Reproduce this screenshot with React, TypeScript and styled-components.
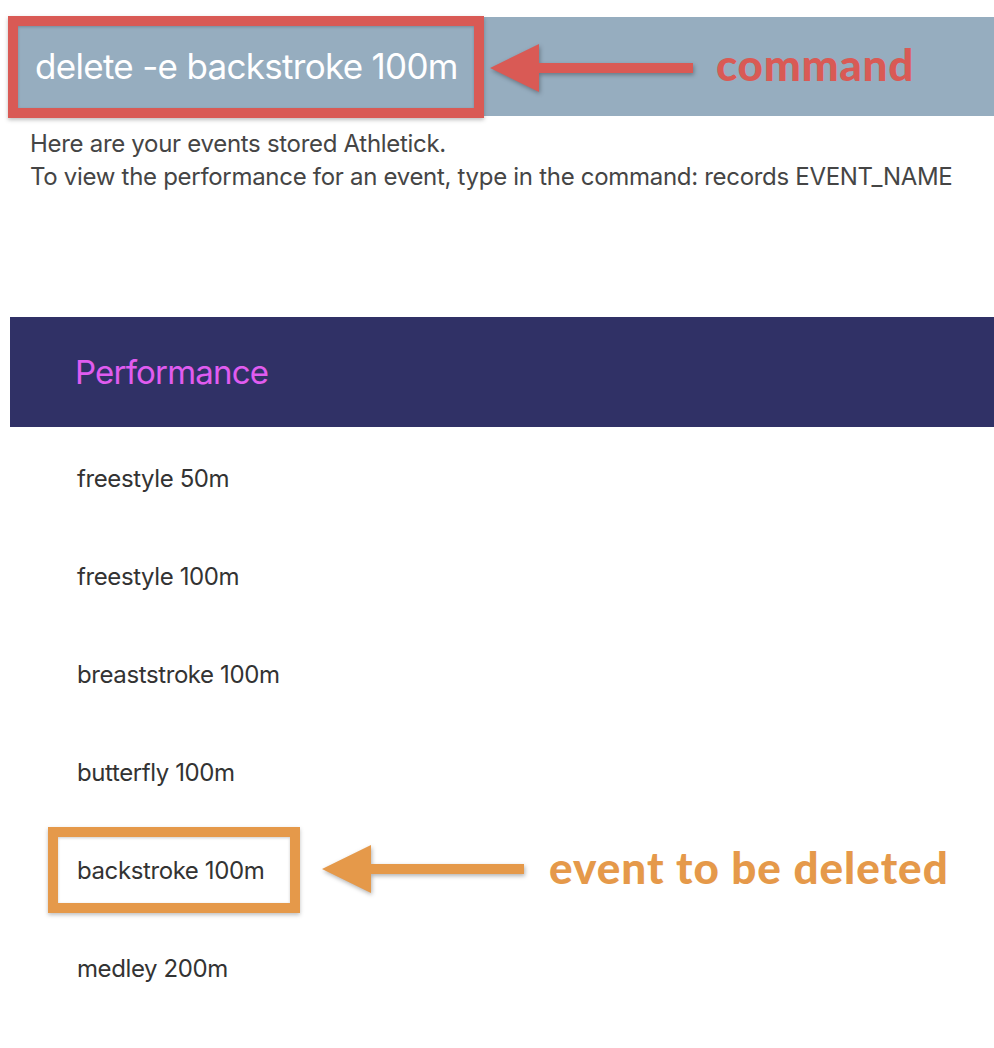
import React from "react";
import styled, { createGlobalStyle } from "styled-components";

const GlobalStyle = createGlobalStyle`
  html, body {
    margin: 0;
    padding: 0;
    background: #ffffff;
  }
  body {
    font-family: Inter, "Noto Sans", "Liberation Sans", sans-serif;
    -webkit-font-smoothing: antialiased;
  }
`;

const Page = styled.div`
  position: relative;
  width: 994px;
  height: 1048px;
  padding: 17px 0 0 10px;
  box-sizing: border-box;
  overflow: hidden;
`;

const CommandBar = styled.div`
  display: flex;
  align-items: center;
  height: 99px;
  padding-left: 25px;
  padding-bottom: 2px;
  box-sizing: border-box;
  background: #96adbf;
`;

const CommandText = styled.span`
  font-size: 35px;
  letter-spacing: -0.7px;
  color: #ffffff;
`;

const Message = styled.div`
  padding: 11px 0 0 20px;
  height: 190px;
  font-size: 24px;
  line-height: 33px;
  letter-spacing: -0.3px;
  color: #454545;
`;

const PanelHeader = styled.div`
  display: flex;
  align-items: center;
  height: 110px;
  padding-left: 65px;
  background: #303166;
`;

const PanelTitle = styled.span`
  font-size: 33px;
  letter-spacing: -0.8px;
  color: #e05cf0;
`;

const EventList = styled.ul`
  list-style: none;
  margin: 0;
  padding: 2px 0 0 67px;
`;

const EventRow = styled.li`
  display: flex;
  align-items: center;
  height: 98px;
  font-size: 24px;
  letter-spacing: -0.4px;
  color: #333333;
`;

const HighlightBox = styled.div<{ $color: string; $left: number; $top: number; $width: number; $height: number }>`
  position: absolute;
  left: ${(p) => p.$left}px;
  top: ${(p) => p.$top}px;
  width: ${(p) => p.$width}px;
  height: ${(p) => p.$height}px;
  box-sizing: border-box;
  border: 10px solid ${(p) => p.$color};
  box-shadow: 0 2px 4px rgba(0, 0, 0, 0.25), inset 0 1px 3px rgba(0, 0, 0, 0.2);
  pointer-events: none;
`;

const Callout = styled.div<{ $left: number; $top: number }>`
  position: absolute;
  left: ${(p) => p.$left}px;
  top: ${(p) => p.$top}px;
  display: flex;
  align-items: center;
`;

const ArrowSvg = styled.svg`
  display: block;
  filter: drop-shadow(1px 2px 2px rgba(0, 0, 0, 0.3));
`;

const CalloutLabel = styled.span<{ $color: string; $gap: number; $lift: number; $spacing: number }>`
  margin-left: ${(p) => p.$gap}px;
  margin-top: -${(p) => p.$lift}px;
  font-family: Lato, "Open Sans", sans-serif;
  font-weight: 900;
  font-size: 44px;
  letter-spacing: ${(p) => p.$spacing}px;
  color: ${(p) => p.$color};
  line-height: 1;
`;

const Arrow = ({ color, headLen, shaftLen }: { color: string; headLen: number; shaftLen: number }) => {
  const w = headLen + shaftLen + 4;
  const h = 56;
  const cy = 26;
  return (
    <ArrowSvg width={w} height={h} viewBox={`0 0 ${w} ${h}`}>
      <polygon
        fill={color}
        points={`1,${cy} ${1 + headLen},${cy - 24} ${1 + headLen},${cy - 5} ${1 + headLen + shaftLen},${cy - 5} ${
          1 + headLen + shaftLen
        },${cy + 5} ${1 + headLen},${cy + 5} ${1 + headLen},${cy + 24}`}
      />
    </ArrowSvg>
  );
};

const events = [
  "freestyle 50m",
  "freestyle 100m",
  "breaststroke 100m",
  "butterfly 100m",
  "backstroke 100m",
  "medley 200m",
];

export default function App() {
  return (
    <>
      <GlobalStyle />
      <Page>
        <CommandBar>
          <CommandText>delete -e backstroke 100m</CommandText>
        </CommandBar>
        <Message>
          Here are your events stored Athletick.
          <br />
          To view the performance for an event, type in the command: records EVENT_NAME
        </Message>
        <PanelHeader>
          <PanelTitle>Performance</PanelTitle>
        </PanelHeader>
        <EventList>
          {events.map((e) => (
            <EventRow key={e}>{e}</EventRow>
          ))}
        </EventList>

        <HighlightBox $color="#d95a55" $left={8} $top={16} $width={476} $height={102} />
        <Callout $left={489} $top={42}>
          <Arrow color="#d95a55" headLen={49} shaftLen={154} />
          <CalloutLabel $color="#d95a55" $gap={20} $lift={12} $spacing={0.7}>command</CalloutLabel>
        </Callout>

        <HighlightBox $color="#e5994a" $left={48} $top={827} $width={252} $height={86} />
        <Callout $left={321} $top={843}>
          <Arrow color="#e5994a" headLen={49} shaftLen={153} />
          <CalloutLabel $color="#e5994a" $gap={22} $lift={8} $spacing={1}>event to be deleted</CalloutLabel>
        </Callout>
      </Page>
    </>
  );
}
